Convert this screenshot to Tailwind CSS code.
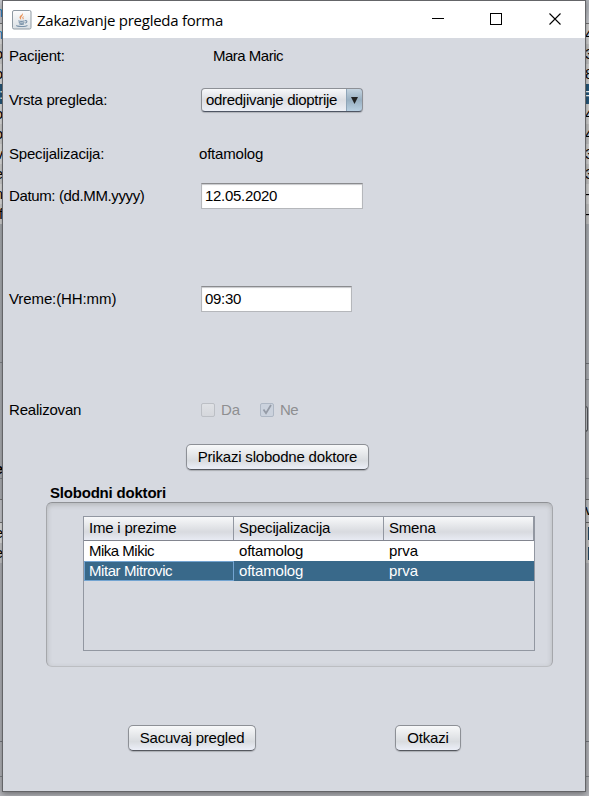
<!DOCTYPE html>
<html lang="sr">
<head>
<meta charset="utf-8">
<title>Zakazivanje pregleda forma</title>
<script src="https://cdn.jsdelivr.net/npm/@tailwindcss/browser@4"></script>
</head>
<body class="w-[589px] h-[796px] overflow-hidden bg-[#b3b5b9] font-['Liberation_Sans',Arial,sans-serif] text-[15px] leading-5 tracking-[-0.2px] text-black">
<div class="relative w-[589px] h-[796px] overflow-hidden">

  <!-- Parent window, visible along the edges of the dialog -->
  <div class="flex h-full justify-between bg-linear-to-b from-[#a9adb2] to-[#b5b6bb]">
    <div class="w-[3px] overflow-hidden flex flex-col items-end">
      <div class="h-6 w-full shrink-0 flex justify-end items-center bg-[#c9cbd0] text-[#1c86c8] border-b border-[#777]">n</div>
      <div class="h-5 w-full shrink-0 flex justify-end bg-[#e4e4e4] text-[#1c86c8]">n</div>
      <div class="h-5 w-full shrink-0 flex justify-end bg-[#d5d5d5]">o</div>
      <div class="h-5 w-full shrink-0 flex justify-end bg-[#e4e4e4]">o</div>
      <div class="h-5 w-full shrink-0 flex justify-end bg-[#27597c] text-white">:</div>
      <div class="h-5 w-full shrink-0 flex justify-end bg-[#e4e4e4]">o</div>
      <div class="h-5 w-full shrink-0 flex justify-end bg-[#d5d5d5]">o</div>
      <div class="h-5 w-full shrink-0 flex justify-end bg-[#e4e4e4]">v</div>
      <div class="h-5 w-full shrink-0 flex justify-end bg-[#d5d5d5]">e</div>
      <div class="h-5 w-full shrink-0 flex justify-end bg-[#e4e4e4]">n</div>
      <div class="h-5 w-full shrink-0 flex justify-end bg-[#d5d5d5]">f</div>
      <div class="h-[139px] w-full shrink-0 border-b border-[#85888d]"></div>
      <div class="h-[96px] w-full shrink-0"></div>
      <div class="h-5 w-full shrink-0 flex justify-end font-bold border-b border-[#85888d]">e</div>
      <div class="h-5 w-full shrink-0"></div>
      <div class="h-6 w-full shrink-0 bg-[#c9cbd0] border-y border-[#777]"></div>
      <div class="h-5 w-full shrink-0 flex justify-end bg-[#e4e4e4]">e</div>
      <div class="h-5 w-full shrink-0 flex justify-end bg-[#c9cacc]">e</div>
      <div class="h-[179px] w-full shrink-0 border-b border-[#777a80]"></div>
      <div class="h-[35px] w-full shrink-0 border-b border-[#85888d]"></div>
    </div>
    <div class="w-[4px] overflow-hidden flex flex-col">
      <div class="h-6 shrink-0 bg-linear-to-b from-[#aeb2b8] to-[#c9cbd0] border-b border-[#777]"></div>
      <div class="h-5 shrink-0 bg-[#d4d4d4]">4</div>
      <div class="h-5 shrink-0 bg-[#c6c6c6]">3</div>
      <div class="h-5 shrink-0 bg-[#d4d4d4]">8</div>
      <div class="h-5 shrink-0 bg-[#27597c] text-white">=</div>
      <div class="h-5 shrink-0 bg-[#d4d4d4]">4</div>
      <div class="h-5 shrink-0 bg-[#c6c6c6]">4</div>
      <div class="h-5 shrink-0 bg-[#d4d4d4]">3</div>
      <div class="h-5 shrink-0 bg-[#c6c6c6]">3</div>
      <div class="h-5 shrink-0 bg-[#d4d4d4]">-</div>
      <div class="h-5 shrink-0 bg-[#c6c6c6]">-</div>
      <div class="h-[140px] shrink-0 border-b border-[#75787d]"></div>
      <div class="h-4 shrink-0 border-b border-[#85888d]"></div>
      <div class="h-[26px] shrink-0"></div>
      <div class="h-[26px] shrink-0 mr-px rounded-r-sm border border-[#55585d] bg-[#c9cbd0]"></div>
      <div class="h-[47px] shrink-0 border-b border-[#85888d]"></div>
      <div class="h-5 shrink-0"></div>
      <div class="h-6 shrink-0 bg-[#bfc1c5] border-y border-[#666]">v</div>
      <div class="h-5 shrink-0 flex justify-end items-center bg-[#c6c6c6]"><span class="h-[13px] w-px bg-[#254763]"></span></div>
      <div class="h-5 shrink-0 flex justify-end items-center bg-[#c6c6c6]"><span class="h-[13px] w-px bg-[#254763]"></span></div>
      <div class="h-[179px] shrink-0 border-b border-[#777a80]"></div>
      <div class="h-[35px] shrink-0 border-b border-[#85888d]"></div>
    </div>
  </div>

  <!-- Dialog -->
  <div class="absolute left-[2px] top-0 w-[584px] h-[792px] border border-[#646568] bg-[#d6d9e0] shadow-[0_2px_6px_rgba(0,0,0,0.4)] flex flex-col">
    <div class="h-[37px] shrink-0 bg-white flex items-center pl-[9px]">
      <svg class="w-5 h-5 shrink-0" viewBox="0 0 20 20" fill="none">
        <defs><linearGradient id="ic" x1="0" y1="0" x2="0" y2="1"><stop offset="0" stop-color="#fdfdfd"/><stop offset="1" stop-color="#d9dfe4"/></linearGradient></defs>
        <rect x=".5" y=".5" width="18.5" height="18.5" rx="1.5" fill="url(#ic)" stroke="#8f9aa3"/>
        <path d="M10.500 2.800C11 4.800 6.800 5.600 7.600 8c.3.900 1 1.400 1.500 2C9.300 8.500 8.700 8 9.400 6.900 10.300 5.600 11.600 4.700 10.500 2.800Z" fill="#e8935a"/>
        <path d="M12.300 5.900c-2 .6-2.500 1.800-1.700 2.600.5.500.4 1-.2 1.600 1.800-1 1.400-1.700 1-2.300-.4-.7.100-1.300.9-1.900Z" fill="#e8935a"/>
        <path d="M6.300 10.700c1.500.6 4.800.6 6.300 0M6.800 12.500c1.500.6 4.200.6 5.600 0M7.300 14.100c1.500.5 3.300.5 4.700 0M13 10.700c2.500-.6 2.500 1.700.2 2.400M4.600 15.200c-.8 1.700 9.500 1.700 10.800.1" stroke="#7891a8" stroke-width="1.100"/>
      </svg>
      <span class="ml-[5px] w-[190px] whitespace-nowrap font-['Open_Sans','Noto_Sans',sans-serif] text-[15px] tracking-[-0.27px]">Zakazivanje pregleda forma</span>
      <div class="ml-auto mr-0.5 flex text-black">
        <svg class="w-[59px] h-[37px]" viewBox="0 0 59 37" stroke="currentColor" shape-rendering="crispEdges"><path d="M25 17.500h12"/></svg>
        <svg class="w-[58px] h-[37px]" viewBox="0 0 58 37" stroke="currentColor" fill="none" shape-rendering="crispEdges"><path d="M24.500 12.500h11v11h-11z"/></svg>
        <svg class="w-[59px] h-[37px]" viewBox="0 0 59 37" stroke="currentColor" stroke-width="1.100"><path d="M25.500 12.500l11 11M36.500 12.500l-11 11"/></svg>
      </div>
    </div>

    <div class="h-9 shrink-0 flex items-center pl-1.5"><span class="w-[204px]">Pacijent:</span><span class="tracking-[-0.5px]">Mara Maric</span></div>

    <div class="h-[52px] shrink-0 flex items-center pl-1.5">
      <span class="w-[192px]">Vrsta pregleda:</span>
      <div class="w-[162px] h-6 flex rounded-[4px] border border-[#8d9096] border-b-[#4e5563] bg-linear-to-b from-[#f7f8fa] via-[#dcdee3] to-[#eceff6] shadow-[0_1px_1px_rgba(0,0,0,0.18)] overflow-hidden">
        <span class="flex-1 pl-1 leading-[22px] whitespace-nowrap tracking-[-0.3px]">odredjivanje dioptrije</span>
        <span class="w-[17px] -my-px -mr-px flex items-center justify-center rounded-r-[4px] border border-l-[#8fa5b8] border-t-[#6d8297] border-r-[#43566b] border-b-[#2d4055] bg-linear-to-b from-[#c5d4e0] via-[#98afc1] to-[#b9d0e2]">
          <svg class="w-[7px] h-[7px]" viewBox="0 0 7 7"><path d="M0 0h7L3.500 7z" fill="#222"/></svg>
        </span>
      </div>
    </div>

    <div class="h-14 shrink-0 flex items-center pl-1.5"><span class="w-[190px]">Specijalizacija:</span><span>oftamolog</span></div>

    <div class="h-7 shrink-0 flex items-center pl-1.5">
      <span class="w-[192px] tracking-[-0.37px]">Datum: (dd.MM.yyyy)</span>
      <div class="w-[162px] h-[26px] bg-white border border-[#b5b7bb] border-t-[#8a8b8e] shadow-[inset_0_1px_1px_#c8c9cc] pl-[3px] leading-6 tracking-[-0.3px]">12.05.2020</div>
    </div>

    <div class="mt-[75px] h-7 shrink-0 flex items-center pl-1.5">
      <span class="w-[192px] tracking-[-0.1px]">Vreme:(HH:mm)</span>
      <div class="w-[151px] h-[26px] bg-white border border-[#b5b7bb] border-t-[#8a8b8e] shadow-[inset_0_1px_1px_#c8c9cc] pl-[3px] leading-6 tracking-[-0.3px]">09:30</div>
    </div>

    <div class="mt-[83px] h-7 shrink-0 flex items-center pl-1.5">
      <span class="w-[192px]">Realizovan</span>
      <div class="w-[59px] flex items-center gap-1.5 text-[#8e8f91]">
        <span class="w-3.5 h-3.5 rounded-[2px] border border-[#bcbfc5] bg-linear-to-b from-[#dfe1e5] to-[#d5d7dc]"></span>Da
      </div>
      <div class="flex items-center gap-1.5 text-[#8e8f91] tracking-[-0.7px]">
        <span class="w-3.5 h-3.5 rounded-[2px] border border-[#aeb7c4] bg-[#cbd2dd]">
          <svg class="w-3 h-3" viewBox="0 0 12 12" fill="none" stroke="#959ba6" stroke-width="1.800"><path d="M2.500 5.500L5 9.200 10 1"/></svg>
        </span>Ne
      </div>
    </div>

    <div class="mt-5 ml-[183px] w-[183px] h-[26px] shrink-0 text-center leading-[24px] rounded-[5px] border border-[#8d9096] border-b-[#55585f] bg-linear-to-b from-[#f8f9fa] via-[#d9dce0] via-65% to-[#eceff8] shadow-[0_1px_1px_rgba(0,0,0,0.2)]">Prikazi slobodne doktore</div>

    <div class="mt-[13px] ml-[47px] h-[19px] shrink-0 font-bold whitespace-nowrap">Slobodni doktori</div>

    <div class="ml-[43px] w-[507px] h-[165px] shrink-0 rounded-[6px] border border-[#b4b6ba] border-t-[#8f9195] border-r-[#a5a7ab] border-l-[#a5a7ab] border-b-[#bcbec2] shadow-[inset_0_2px_5px_rgba(90,90,80,0.26)] pt-[13px] pl-9">
      <div class="w-[452px] h-[135px] border border-[#9297a1] bg-[#d6d9e0]">
        <div class="h-[24px] grid grid-cols-[150px_150px_150px] border-b border-[#82858f] bg-linear-to-b from-[#f8f9fa] via-[#d8dadf] via-65% to-[#e8ebf3] leading-[22px]">
          <span class="pl-[5px] border-r border-[#9297a1]">Ime i prezime</span>
          <span class="pl-[5px] border-r border-[#9297a1]">Specijalizacija</span>
          <span class="pl-[5px] border-r border-[#9297a1]">Smena</span>
        </div>
        <div class="h-5 grid grid-cols-[150px_150px_150px] bg-white">
          <span class="pl-[5px] tracking-[-0.5px]">Mika Mikic</span><span class="pl-[5px]">oftamolog</span><span class="pl-[5px] tracking-normal">prva</span>
        </div>
        <div class="h-5 grid grid-cols-[150px_150px_150px] bg-[#39698a] text-white">
          <span class="pl-1 border border-[#73a4d1] leading-[18px] tracking-[-0.43px]">Mitar Mitrovic</span><span class="pl-[5px]">oftamolog</span><span class="pl-[5px] tracking-normal">prva</span>
        </div>
      </div>
    </div>

    <div class="mt-[58px] ml-[125px] h-[26px] shrink-0 flex gap-[139px] text-center leading-[24px]">
      <div class="w-[128px] rounded-[5px] border border-[#8d9096] border-b-[#55585f] bg-linear-to-b from-[#f8f9fa] via-[#d9dce0] via-65% to-[#eceff8] shadow-[0_1px_1px_rgba(0,0,0,0.2)]">Sacuvaj pregled</div>
      <div class="w-[66px] rounded-[5px] border border-[#8d9096] border-b-[#55585f] bg-linear-to-b from-[#f8f9fa] via-[#d9dce0] via-65% to-[#eceff8] shadow-[0_1px_1px_rgba(0,0,0,0.2)]">Otkazi</div>
    </div>
  </div>
</div>
</body>
</html>
